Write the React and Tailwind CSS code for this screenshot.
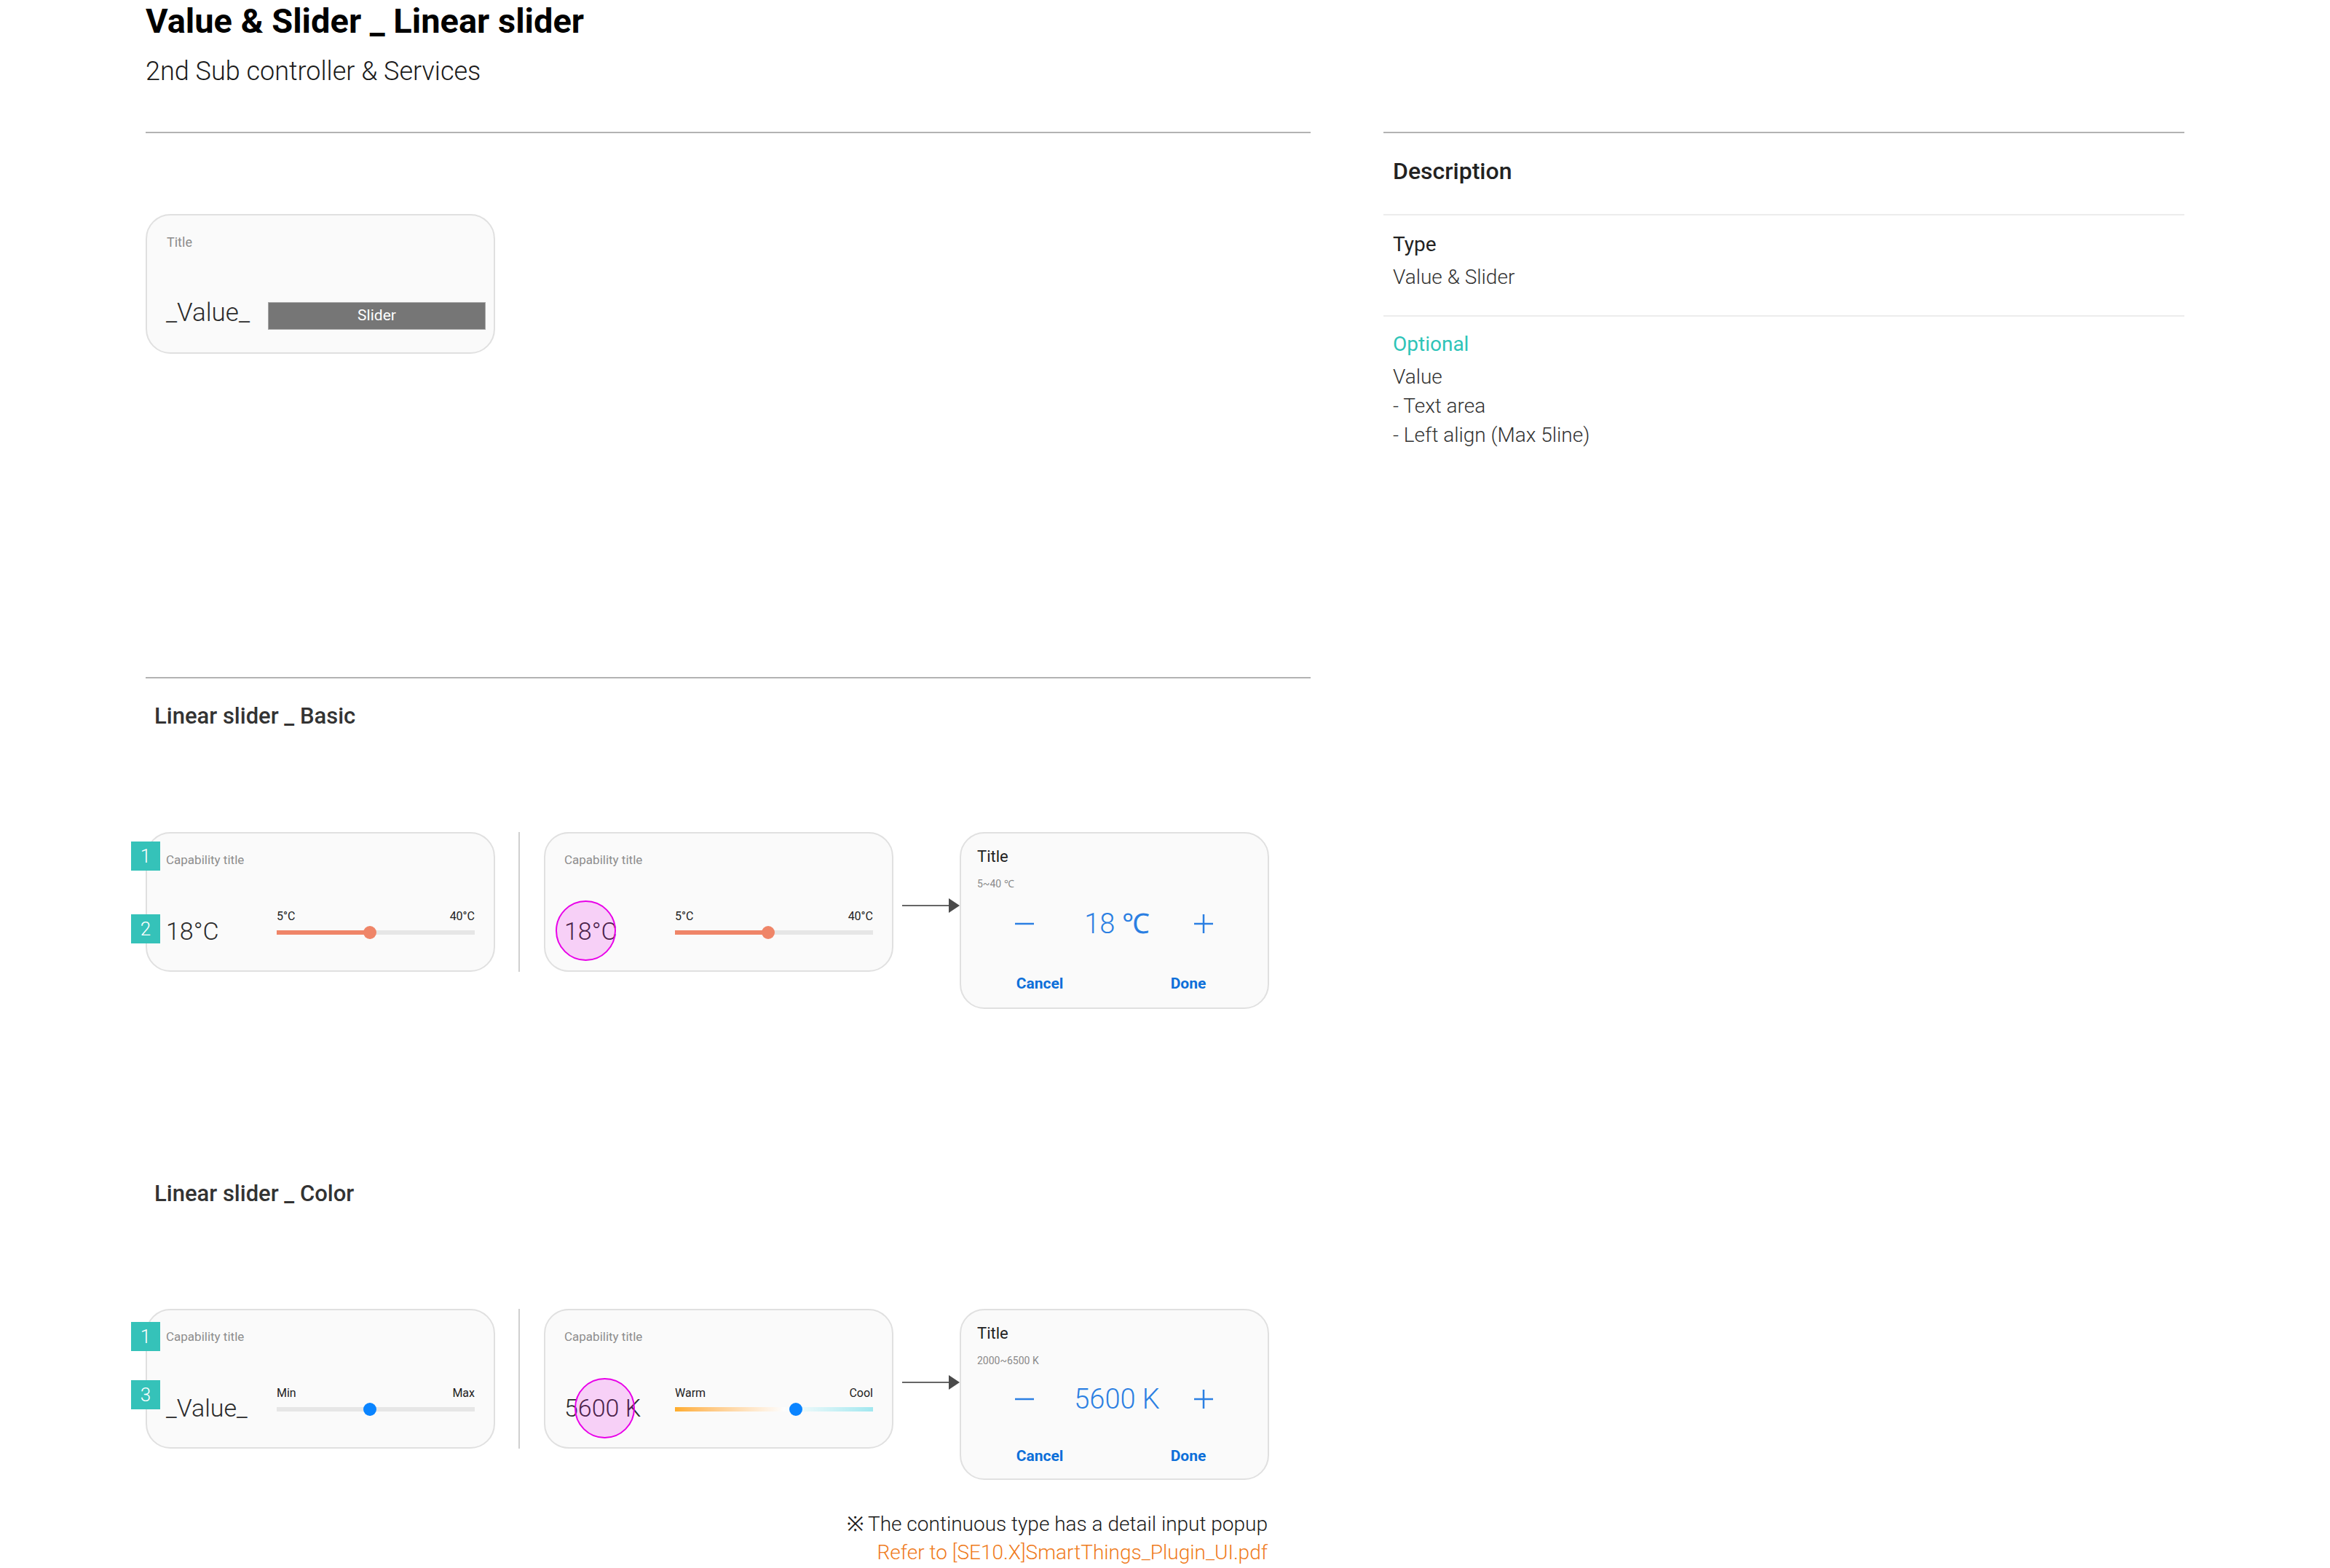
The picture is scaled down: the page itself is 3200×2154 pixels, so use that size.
import React from 'react';

// annotation badge that sits over the card's left edge
function Badge({ n, pos }) {
  return (
    <div className={`absolute -left-[22px] ${pos} flex h-[40px] w-[40px] items-center justify-center bg-[#35c2b9] text-[26px] font-light leading-none text-white`}>
      {n}
    </div>
  );
}

function Track({ pct, kind }) {
  const thumbColor = kind === 'basic' ? 'bg-[#ef8568]' : 'bg-[#0a84ff]';
  return (
    <div
      className={`relative mt-[11px] h-[6px] w-full ${
        kind === 'color'
          ? 'bg-linear-to-r from-[#ffac28] via-[#fdfdfd] via-55% to-[#a0e7ef]'
          : 'bg-[#e6e6e6]'
      }`}
    >
      {kind === 'basic' && (
        <div className="absolute left-0 top-0 h-full bg-[#ef8568]" style={{ width: `${pct}%` }} />
      )}
      <div
        className={`absolute top-1/2 h-[18px] w-[18px] -translate-x-1/2 -translate-y-1/2 rounded-full ${thumbColor}`}
        style={{ left: `${pct}%` }}
      />
    </div>
  );
}

function SliderCard({ value, minLabel, maxLabel, pct, kind, children }) {
  return (
    <div className="relative h-[192px] w-[480px] shrink-0 rounded-[34px] border-2 border-[#e0e0e0] bg-[#fafafa] pl-[26px] pt-[26px]">
      <div className="text-[17px] leading-[20px] text-[#8d8d8d]">Capability title</div>
      <div className="mt-[60px] flex items-start">
        <div className="w-[152px] shrink-0 whitespace-nowrap pt-[11px] text-[34px] font-light leading-[34px] text-[#2a2a2a]">
          {value}
        </div>
        <div className="w-[272px]">
          <div className="flex justify-between text-[16px] leading-[16px] text-[#222]">
            <span>{minLabel}</span>
            <span>{maxLabel}</span>
          </div>
          <Track pct={pct} kind={kind} />
        </div>
      </div>
      {children}
    </div>
  );
}

function Arrow() {
  return (
    <div className="ml-[12px] mt-[91px] flex h-[20px] items-center">
      <div className="h-[2px] w-[64px] bg-[#666]" />
      <svg width="15" height="20" viewBox="0 0 15 20">
        <polygon points="0,0 15,10 0,20" fill="#4a4a4a" />
      </svg>
    </div>
  );
}

function Popup({ range, value, compact }) {
  return (
    <div
      className={`w-[425px] shrink-0 rounded-[34px] border-2 border-[#e0e0e0] bg-[#fafafa] pt-[21px] ${
        compact ? 'h-[235px]' : 'h-[243px]'
      }`}
    >
      <div className="pl-[22px] text-[22px] leading-[22px] text-[#222]">Title</div>
      <div className="mt-[19px] pl-[22px] text-[14px] leading-[14px] text-[#8a8a8a]">{range}</div>
      <div className={`flex h-[38px] items-center ${compact ? 'mt-[27px]' : 'mt-[29px]'}`}>
        <div className="ml-[57px] flex w-[60px] justify-center">
          <svg width="26" height="26" viewBox="0 0 26 26">
            <line x1="0" y1="13" x2="26" y2="13" stroke="#2b7fe2" strokeWidth="2.5" />
          </svg>
        </div>
        <div className="ml-[17px] w-[160px] whitespace-nowrap text-center text-[38px] font-light leading-[38px] text-[#2b7fe2]">
          {value}
        </div>
        <div className="ml-[9px] flex w-[60px] justify-center">
          <svg width="26" height="26" viewBox="0 0 26 26">
            <line x1="0" y1="13" x2="26" y2="13" stroke="#2b7fe2" strokeWidth="2.5" />
            <line x1="13" y1="0" x2="13" y2="26" stroke="#2b7fe2" strokeWidth="2.5" />
          </svg>
        </div>
      </div>
      <div className={`flex text-[21px] font-bold leading-[21px] text-[#0d6fd9] ${compact ? 'mt-[49px]' : 'mt-[53px]'}`}>
        <div className="ml-[48px] w-[120px] text-center">Cancel</div>
        <div className="ml-[84px] w-[120px] text-center">Done</div>
      </div>
    </div>
  );
}

function Divider() {
  return <div className="ml-[32px] h-[192px] w-[2px] shrink-0 bg-[#d0d0d0]" />;
}

export default function App() {
  return (
    <div className="relative h-[2154px] w-[3200px] overflow-hidden bg-white font-[Roboto,sans-serif] text-[#222]">
      <div className="pl-[200px] pt-[5px]">
        <h1 className="text-[47px] font-bold leading-[48px] text-black">Value &amp; Slider _ Linear slider</h1>
        <p className="mt-[27px] text-[36px] font-light leading-[36px] text-[#1a1a1a]">2nd Sub controller &amp; Services</p>
      </div>

      <div className="mt-[65px] flex pl-[200px]">
        {/* left column */}
        <div className="w-[1600px] shrink-0">
          <div className="h-[2px] w-full bg-[#b3b3b3]" />

          <div className="mt-[111px] h-[192px] w-[480px] rounded-[34px] border-2 border-[#e0e0e0] bg-[#fafafa] pl-[26px] pt-[28px]">
            <div className="pl-[1px] text-[18px] leading-[18px] text-[#8c8c8c]">Title</div>
            <div className="mt-[70px] flex items-start">
              <div className="w-[140px] shrink-0 text-[35px] font-light leading-[35px] text-[#2a2a2a]">_Value_</div>
              <div className="mt-[3px] flex h-[38px] w-[299px] items-center justify-center border border-[#a8a8a8] bg-[#767676] text-[21px] text-white">
                Slider
              </div>
            </div>
          </div>

          <div className="mt-[444px] h-[2px] w-full bg-[#b3b3b3]" />
          <h2 className="mt-[36px] pl-[12px] text-[31px] font-medium leading-[31px] text-[#333]">Linear slider _ Basic</h2>

          <div className="mt-[144px] flex items-start">
            <SliderCard value="18°C" minLabel="5°C" maxLabel="40°C" pct={47} kind="basic">
              <Badge n="1" pos="top-[11px]" />
              <Badge n="2" pos="top-[111px]" />
            </SliderCard>
            <Divider />
            <div className="ml-[33px]">
              <SliderCard value="18°C" minLabel="5°C" maxLabel="40°C" pct={47} kind="basic">
                <div className="absolute left-[14px] top-[92px] h-[83px] w-[83px] rounded-full border-2 border-[#e800e8] bg-[#e600e6]/[0.17]" />
              </SliderCard>
            </div>
            <Arrow />
            <Popup range="5~40 ℃" value="18 ℃" />
          </div>

          <h2 className="mt-[238px] pl-[12px] text-[31px] font-medium leading-[31px] text-[#333]">Linear slider _ Color</h2>

          <div className="mt-[143px] flex items-start">
            <SliderCard value="_Value_" minLabel="Min" maxLabel="Max" pct={47} kind="plain">
              <Badge n="1" pos="top-[16px]" />
              <Badge n="3" pos="top-[96px]" />
            </SliderCard>
            <Divider />
            <div className="ml-[33px]">
              <SliderCard value="5600 K" minLabel="Warm" maxLabel="Cool" pct={61} kind="color">
                <div className="absolute left-[40px] top-[93px] h-[83px] w-[83px] rounded-full border-2 border-[#e800e8] bg-[#e600e6]/[0.17]" />
              </SliderCard>
            </div>
            <Arrow />
            <Popup range="2000~6500 K" value="5600 K" compact />
          </div>

          <div className="mt-[41px] w-[1541px] text-right text-[28px] font-light leading-[39px]">
            <div className="text-[#1a1a1a]">※ The continuous type has a detail input popup</div>
            <div className="text-[#ef7b20]">Refer to [SE10.X]SmartThings_Plugin_UI.pdf</div>
          </div>
        </div>

        {/* description column */}
        <div className="ml-[100px] w-[1100px] shrink-0">
          <div className="h-[2px] w-full bg-[#b3b3b3]" />
          <div className="mt-[36px] pl-[13px] text-[32px] font-medium leading-[32px] text-[#222]">Description</div>
          <div className="mt-[43px] h-[2px] w-full bg-[#ececec]" />
          <div className="mt-[17px] pl-[13px] text-[28px] leading-[45px]">
            <div className="font-normal text-[#222]">Type</div>
            <div className="font-light text-[#333]">Value &amp; Slider</div>
          </div>
          <div className="mt-[30px] h-[2px] w-full bg-[#ececec]" />
          <div className="mt-[18px] pl-[13px] text-[28px] font-light leading-[40px] text-[#333]">
            <div className="mb-[5px] font-normal text-[#2ec4b8]">Optional</div>
            <div>Value</div>
            <div>- Text area</div>
            <div>- Left align (Max 5line)</div>
          </div>
        </div>
      </div>
    </div>
  );
}
